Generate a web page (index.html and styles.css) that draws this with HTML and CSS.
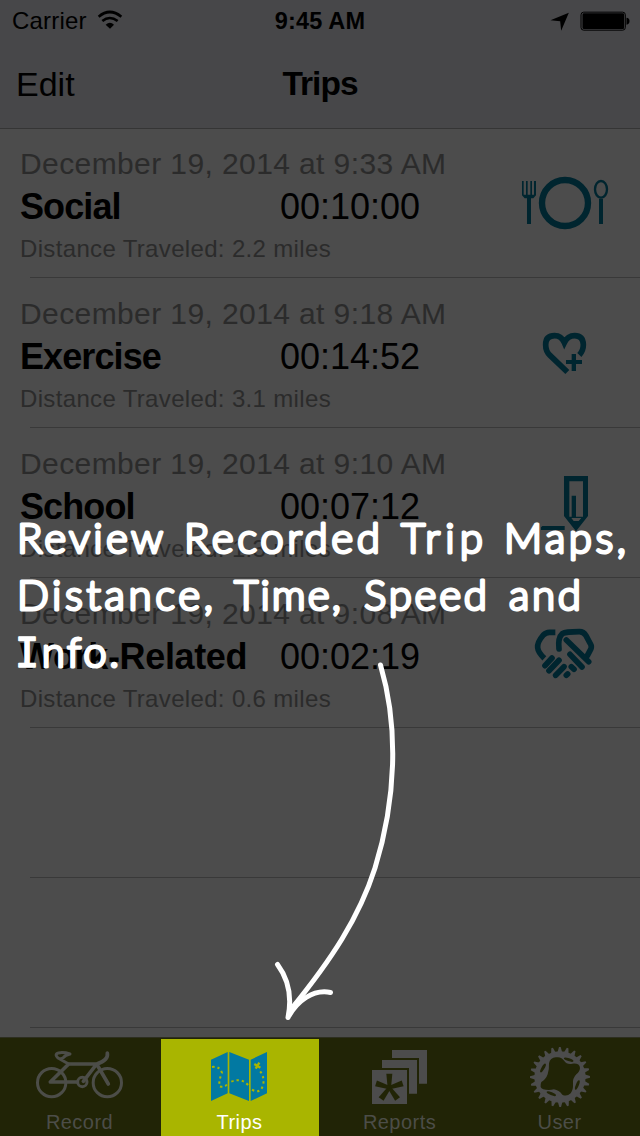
FILE: index.html
```
<!DOCTYPE html>
<html lang="en">
<head>
<meta charset="utf-8">
<title>Trips</title>
<link rel="stylesheet" href="styles.css">
</head>
<body>
<div class="screen">
  <header class="header">
    <div class="status">
      <div class="carrier"><span>Carrier</span>
        <svg class="wifi" viewBox="290 25 84 66" width="28" height="22"><g fill="none" stroke="#000" stroke-width="8"><path d="M298 51Q331 23 366 51"/><path d="M309 64Q331 46 355 64"/></g><path d="M319 75Q332 64 344 75L332 87Z"/></svg>
      </div>
      <div class="clock">9:45 AM</div>
      <div class="indicators">
        <svg viewBox="680 25 260 72" width="87" height="24"><path d="M690 59L745 36L722 90L719 62Z"/><rect x="781.5" y="34.500" width="133" height="54" rx="8" fill="none" stroke="#000" stroke-width="3"/><rect x="786" y="38" width="125" height="47" rx="4"/><path d="M918 51Q927 52 927 61Q927 71 918 72Z"/></svg>
      </div>
    </div>
    <nav class="nav"><span class="edit">Edit</span><h1 class="title">Trips</h1><span></span></nav>
  </header>

  <main class="list">
    <section class="row">
      <div class="info">
        <div class="date">December 19, 2014 at 9:33 AM</div>
        <div class="main"><span class="kind">Social</span><span class="time">00:10:00</span></div>
        <div class="dist">Distance Traveled: 2.2 miles</div>
      </div>
      <svg class="icon" viewBox="510 128 130 150"><g transform="translate(500 160) scale(.33333)"><circle cx="195" cy="129" r="69" fill="none" stroke="#00252f" stroke-width="19"/><path d="M66 63h5v41h7V63h5v41h8V63h5v41h6V63h6v43l-8 9h-7v77H81v-77h-7l-8-9Z"/><path d="M297 192v-76h12v76Z"/><ellipse cx="303" cy="88" rx="18" ry="25" fill="none" stroke="#00252f" stroke-width="7"/></g></svg>
    </section>
    <section class="row">
      <div class="info">
        <div class="date">December 19, 2014 at 9:18 AM</div>
        <div class="main"><span class="kind">Exercise</span><span class="time">00:14:52</span></div>
        <div class="dist">Distance Traveled: 3.1 miles</div>
      </div>
      <svg class="icon" viewBox="510 278 130 150"><g transform="translate(520 310) scale(.33333)"><path d="M142 186L90 136Q77 124 77 104Q77 77 104 77Q124 77 133 98Q143 77 164 77Q189 77 190 104Q190 122 178 135" fill="none" stroke="#00252f" stroke-width="17"/><path d="M155 132h13v18h18v12h-18v21h-13v-21h-17v-12h17Z"/></g></svg>
    </section>
    <section class="row">
      <div class="info">
        <div class="date">December 19, 2014 at 9:10 AM</div>
        <div class="main"><span class="kind">School</span><span class="time">00:07:12</span></div>
        <div class="dist">Distance Traveled: 1.3 miles</div>
      </div>
      <svg class="icon" viewBox="510 428 130 150"><g transform="translate(520 460) scale(.33333)"><path fill-rule="evenodd" d="M132 48h72v120l-36 46l-36-46ZM148 64v106h7v-63h13v63h21V64ZM154 174l7 9h15l8-9Z"/><path d="M67 198h67v12H63v-8Z"/></g></svg>
    </section>
    <section class="row">
      <div class="info">
        <div class="date">December 19, 2014 at 9:08 AM</div>
        <div class="main"><span class="kind kind-work">Work-Related</span><span class="time">00:02:19</span></div>
        <div class="dist">Distance Traveled: 0.6 miles</div>
      </div>
      <svg class="icon" viewBox="510 578 130 150"><g transform="translate(520 615) scale(.33333)" fill="none" stroke="#00252f" stroke-width="17" stroke-linecap="round" stroke-linejoin="round"><path stroke-linecap="butt" d="M106 52H88Q78 52 70 60Q51 82 53 98Q54 112 73 130"/><path d="M117 102Q113 69 127 56Q137 50 178 50Q191 50 198 62L213 90Q216 98 210 107L202 122"/><path d="M139 75L206 140"/><path d="M150 118L186 156M75 152L96 129M87 167L117 136M107 181L132 155M139 181L143 177M154 155L162 163"/></g></svg>
    </section>
    <section class="row"></section>
    <section class="row"></section>
  </main>

  <footer class="tabs">
    <div class="tab">
      <svg viewBox="0 1037 160 71"><g transform="translate(0 1030) scale(.33333)" fill="none" stroke="#4c4d48" stroke-width="9" stroke-linecap="round" stroke-linejoin="round"><circle cx="155" cy="155" r="42.500"/><circle cx="322" cy="155" r="42.500"/><path stroke-width="11" d="M232 153H151L206 99H290L250 151M325 159L290 99Q326 88 322 66"/><circle cx="247" cy="153" r="14"/><path d="M206 99L174 81Q160 67 181 65Q195 64 210 69Q196 72 190 80Q183 86 174 81"/></g></svg>
      <span>Record</span>
    </div>
    <div class="tab active">
      <svg viewBox="160 1037 160 71"><g transform="translate(0 1030) scale(.33333)"><path fill="#0279a2" d="M633 86L683 63V187L633 210ZM688 63L747 86V210L688 187ZM752 86L801 63V187L752 210Z"/><path fill="none" stroke="#a9b500" stroke-width="6" stroke-dasharray="7 9" d="M636 108Q660 105 666 126Q655 150 659 166Q674 171 681 160M694 152Q725 139 747 165M756 176Q781 190 789 163Q795 138 779 119"/><path stroke="#a9b500" stroke-width="7" d="M763 99l18 11M778 95l-11 18"/></g></svg>
      <span>Trips</span>
    </div>
    <div class="tab">
      <svg viewBox="320 1037 160 71"><g transform="translate(320 1030) scale(.33333)"><path fill="#4c4c4c" d="M216 57H321V158H297V81H216ZM186 87H291V188H267V111H186ZM156 117H261V219H156Z"/><g fill="#212406" transform="translate(208 170)"><path id="arm" d="M-5 0L-9-42H9L5 0Z"/><use href="#arm" transform="rotate(72)"/><use href="#arm" transform="rotate(144)"/><use href="#arm" transform="rotate(216)"/><use href="#arm" transform="rotate(288)"/></g></g></svg>
      <span>Reports</span>
    </div>
    <div class="tab">
      <svg viewBox="480 1037 160 71"><defs><path id="tooth" d="M-8-73L-3-90H2L7-73Z"/><g id="teeth"><use href="#tooth"/><use href="#tooth" transform="rotate(15)"/><use href="#tooth" transform="rotate(30)"/></g></defs><g transform="translate(320 1030) scale(.33333)"><g fill="#4c4c4c" transform="translate(720 138)"><circle r="77"/><use href="#teeth"/><use href="#teeth" transform="rotate(45)"/><use href="#teeth" transform="rotate(90)"/><use href="#teeth" transform="rotate(135)"/><use href="#teeth" transform="rotate(180)"/><use href="#teeth" transform="rotate(225)"/><use href="#teeth" transform="rotate(270)"/><use href="#teeth" transform="rotate(315)"/></g><g fill="#212406"><path d="M687 97Q690 80 708 79Q724 76 733 90Q740 101 757 98Q779 96 780 111Q779 123 769 130Q757 142 759 160Q760 177 752 187Q740 198 727 191Q717 178 702 175Q686 179 670 175Q657 169 664 153Q678 145 683 130Q688 115 687 97Z"/><ellipse cx="669" cy="111" rx="4.500" ry="15" transform="rotate(30 669 111)"/><ellipse cx="746" cy="86" rx="15" ry="4.500" transform="rotate(18 746 86)"/><ellipse cx="772" cy="162" rx="4.500" ry="15" transform="rotate(22 772 162)"/><ellipse cx="694" cy="188" rx="15" ry="4.500" transform="rotate(22 694 188)"/></g></g></svg>
      <span>User</span>
    </div>
  </footer>

  <svg class="coach" viewBox="0 0 640 1136">
    <g class="hand">
      <text x="17" y="552.500" textLength="146">Review</text>
      <text x="184" y="552.500" textLength="196">Recorded</text>
      <text x="401" y="552.500" textLength="82">Trip</text>
      <text x="504" y="552.500" textLength="122">Maps,</text>
      <text x="17" y="609.500" textLength="196">Distance,</text>
      <text x="234" y="609.500" textLength="107">Time,</text>
      <text x="364" y="609.500" textLength="123">Speed</text>
      <text x="509" y="609.500" textLength="72">and</text>
      <text x="15" y="666.500" textLength="104"><tspan class="serif-i">I</tspan>nfo.</text>
    </g>
    <g fill="none" stroke="#fff" stroke-width="5" stroke-linecap="round" stroke-linejoin="round">
      <path d="M380.500 665C399 728 396 800 375 868C359 918 331 960 292 1008"/>
      <path d="M277.500 964.500C289 980 292 998 288 1017.500C297 1001 313 989 330.500 992.500"/>
    </g>
  </svg>
</div>
</body>
</html>
```
FILE: styles.css
```
* { box-sizing: border-box; }
body { margin: 0; font-family: "Liberation Sans", Arial, sans-serif; background: #4c4c4c; color: #000; }
svg { display: block; }
.screen { position: relative; width: 640px; height: 1136px; overflow: hidden; display: flex; flex-direction: column; background: #4c4c4c; }
.header { height: 129px; flex: none; margin-bottom: -1px; background: #474749; border-bottom: 1px solid #353535; }
.status { height: 40px; display: grid; grid-template-columns: 1fr auto 1fr; align-items: center; font-size: 24px; line-height: 40px; padding: 1px 0 0 12px; }
.carrier { display: flex; align-items: center; gap: 9px; letter-spacing: .2px; }
.wifi { margin-top: -4px; }
.clock { font-weight: bold; font-size: 23.500px; margin-left: -12px; letter-spacing: .2px; }
.indicators { display: flex; justify-content: flex-end; padding-right: 6px; }
.indicators svg { margin-top: -1px; }
.nav { height: 88px; display: grid; grid-template-columns: 1fr auto 1fr; align-items: center; padding: 0 16px; font-size: 34px; }
.title { margin: 0; font-size: 33.500px; letter-spacing: -1px; }
.list { flex: none; height: 909px; overflow: hidden; }
.row { height: 150px; display: flex; justify-content: space-between; background: linear-gradient(#393939, #393939) 30px 149px / 610px 1px no-repeat; }
.info { padding: 15px 0 0 20px; width: 490px; }
.date { font-size: 30px; line-height: 42px; letter-spacing: .4px; color: #2b2b2b; white-space: nowrap; }
.main { display: grid; grid-template-columns: 260px 1fr; font-size: 36px; line-height: 44px; }
.kind { font-weight: bold; letter-spacing: -.9px; white-space: nowrap; }
.kind-work { letter-spacing: -.35px; }
.time { white-space: nowrap; }
.dist { font-size: 24px; line-height: 40px; letter-spacing: .34px; color: #2b2b2b; white-space: nowrap; }
.icon { width: 130px; height: 150px; fill: #00252f; }
.tabs { height: 99px; flex: none; display: grid; grid-template-columns: repeat(4, 160px); border-top: 1px solid #2d2e20; background: #212406; }
.tab { display: flex; flex-direction: column; align-items: center; color: #4c4d48; font-size: 20px; line-height: 26px; letter-spacing: .45px; }
.tab span { margin-right: 1px; }
.tab svg { width: 160px; height: 71px; flex: none; }
.active { color: #fff; background: linear-gradient(#a9b500, #a9b500) 1px 1px / 158px 97px no-repeat; }
.coach { position: absolute; left: 0; top: 0; width: 640px; height: 1136px; }
.hand { font-family: Lato, "Open Sans", sans-serif; font-weight: 300; font-size: 42px; fill: #fff; stroke: #fff; stroke-width: 3px; stroke-linejoin: round; stroke-linecap: round; }
.serif-i { font-family: "DejaVu Sans Mono", monospace; font-size: 40px; stroke-width: 1.500px; }
```
